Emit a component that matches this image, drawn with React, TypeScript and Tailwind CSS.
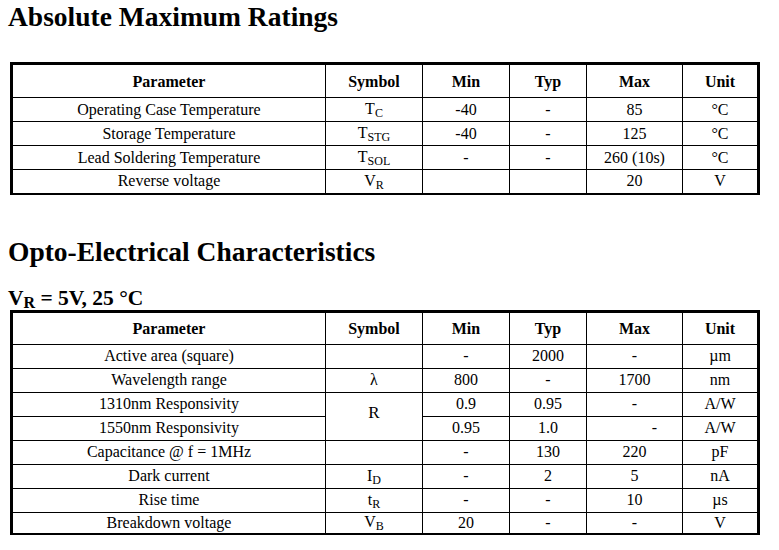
import React from 'react'

type Row = {
  param: string
  symbol?: React.ReactNode
  min?: string
  typ?: string
  max?: string
  unit: string
}

const Sym = ({ main, sub }: { main: string; sub: string }) => (
  <span>
    {main}
    <span className="relative top-[3px] text-[12px]">{sub}</span>
  </span>
)

const cell = 'border border-black text-center align-middle p-0'

const HeaderRow = ({ h }: { h: string }) => (
  <tr className={h}>
    <th className={`${cell} w-[314px] font-bold pt-[2px]`}>Parameter</th>
    <th className={`${cell} w-[97px] font-bold pt-[2px]`}>Symbol</th>
    <th className={`${cell} w-[87px] font-bold pt-[2px]`}>Min</th>
    <th className={`${cell} w-[77px] font-bold pt-[2px]`}>Typ</th>
    <th className={`${cell} w-[96px] font-bold pt-[2px]`}>Max</th>
    <th className={`${cell} font-bold pt-[2px]`}>Unit</th>
  </tr>
)

const ratings: Row[] = [
  { param: 'Operating Case Temperature', symbol: <Sym main="T" sub="C" />, min: '-40', typ: '-', max: '85', unit: '°C' },
  { param: 'Storage Temperature', symbol: <Sym main="T" sub="STG" />, min: '-40', typ: '-', max: '125', unit: '°C' },
  { param: 'Lead Soldering Temperature', symbol: <Sym main="T" sub="SOL" />, min: '-', typ: '-', max: '260 (10s)', unit: '°C' },
  { param: 'Reverse voltage', symbol: <Sym main="V" sub="R" />, min: '', typ: '', max: '20', unit: 'V' },
]

const App: React.FC = () => {
  return (
    <div
      className="w-[779px] h-[550px] bg-white text-black overflow-hidden"
      style={{ fontFamily: '"Liberation Serif", "Times New Roman", serif' }}
    >
      <h1 className="pl-[8px] pt-[3px] text-[27.5px] leading-[27px] font-bold">Absolute Maximum Ratings</h1>

      <table className="ml-[10px] mt-[32px] w-[750px] border-collapse border-[3px] border-b-2 border-black text-[16px] leading-[18px]">
        <tbody>
          <HeaderRow h="h-[34px]" />
          {ratings.map((r) => (
            <tr key={r.param} className="h-[24px]">
              <td className={cell}>{r.param}</td>
              <td className={cell}>{r.symbol}</td>
              <td className={cell}>{r.min}</td>
              <td className={cell}>{r.typ}</td>
              <td className={cell}>{r.max}</td>
              <td className={cell}>{r.unit}</td>
            </tr>
          ))}
        </tbody>
      </table>

      <h1 className="pl-[8px] mt-[43px] text-[27.5px] leading-[27px] font-bold">Opto-Electrical Characteristics</h1>

      <div className="pl-[8px] mt-[23px] text-[21.5px] leading-[20px] font-bold">
        V<span className="relative top-[3px] text-[16px] leading-none">R</span> = 5V, 25 °C
      </div>

      <table className="ml-[10px] mt-[2px] w-[750px] border-collapse border-[3px] border-b-2 border-black text-[16px] leading-[18px]">
        <tbody>
          <HeaderRow h="h-[33px]" />
          <tr className="h-[24px]">
            <td className={cell}>Active area (square)</td>
            <td className={cell}></td>
            <td className={cell}>-</td>
            <td className={cell}>2000</td>
            <td className={cell}>-</td>
            <td className={cell}>µm</td>
          </tr>
          <tr className="h-[24px]">
            <td className={cell}>Wavelength range</td>
            <td className={cell}>λ</td>
            <td className={cell}>800</td>
            <td className={cell}>-</td>
            <td className={cell}>1700</td>
            <td className={cell}>nm</td>
          </tr>
          <tr className="h-[24px]">
            <td className={cell}>1310nm Responsivity</td>
            <td className={`${cell} text-[17px]`} rowSpan={2}>
              <span className="relative top-[-3px]">R</span>
            </td>
            <td className={cell}>0.9</td>
            <td className={cell}>0.95</td>
            <td className={cell}>-</td>
            <td className={cell}>A/W</td>
          </tr>
          <tr className="h-[24px]">
            <td className={cell}>1550nm Responsivity</td>
            <td className={cell}>0.95</td>
            <td className={cell}>1.0</td>
            <td className={`${cell} pl-[40px]`}>-</td>
            <td className={cell}>A/W</td>
          </tr>
          <tr className="h-[24px]">
            <td className={cell}>Capacitance @ f = 1MHz</td>
            <td className={cell}></td>
            <td className={cell}>-</td>
            <td className={cell}>130</td>
            <td className={cell}>220</td>
            <td className={cell}>pF</td>
          </tr>
          <tr className="h-[24px]">
            <td className={cell}>Dark current</td>
            <td className={cell}>
              <Sym main="I" sub="D" />
            </td>
            <td className={cell}>-</td>
            <td className={cell}>2</td>
            <td className={cell}>5</td>
            <td className={cell}>nA</td>
          </tr>
          <tr className="h-[24px]">
            <td className={cell}>Rise time</td>
            <td className={cell}>
              <Sym main="t" sub="R" />
            </td>
            <td className={cell}>-</td>
            <td className={cell}>-</td>
            <td className={cell}>10</td>
            <td className={cell}>µs</td>
          </tr>
          <tr className="h-[22px]">
            <td className={cell}>Breakdown voltage</td>
            <td className={cell}>
              <Sym main="V" sub="B" />
            </td>
            <td className={cell}>20</td>
            <td className={cell}>-</td>
            <td className={cell}>-</td>
            <td className={cell}>V</td>
          </tr>
        </tbody>
      </table>
    </div>
  )
}

export default App
